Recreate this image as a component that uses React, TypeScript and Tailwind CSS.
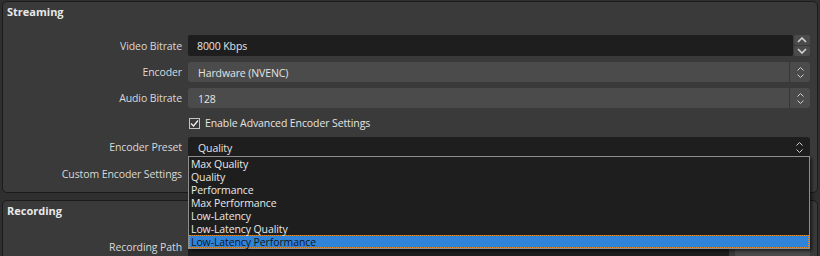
import React from "react";

const Up = ({ big }: { big?: boolean }) =>
  big ? (
    <svg width="10" height="6" viewBox="0 0 10 6"><path d="M1 5 L5 1 L9 5" fill="none" stroke="#d4d4d4" strokeWidth="1.6" /></svg>
  ) : (
    <svg width="7" height="4" viewBox="0 0 7 4"><path d="M0.5 3.5 L3.5 0.5 L6.5 3.5" fill="none" stroke="#cfcfcf" strokeWidth="1" /></svg>
  );
const Down = ({ big }: { big?: boolean }) =>
  big ? (
    <svg width="10" height="6" viewBox="0 0 10 6"><path d="M1 1 L5 5 L9 1" fill="none" stroke="#d4d4d4" strokeWidth="1.6" /></svg>
  ) : (
    <svg width="7" height="4" viewBox="0 0 7 4"><path d="M0.5 0.5 L3.5 3.5 L6.5 0.5" fill="none" stroke="#cfcfcf" strokeWidth="1" /></svg>
  );

const ComboArrows = ({ divider }: { divider?: boolean }) => (
  <div className={`w-[21px] h-full flex flex-col items-center justify-center gap-[3px] ${divider ? "border-l border-[#363636]" : ""}`}>
    <Up />
    <Down />
  </div>
);

const Label = ({ children }: { children: React.ReactNode }) => (
  <div className="w-[179px] h-full pt-[2px] text-right text-[#d9d9d9] flex items-center justify-end">{children}</div>
);

export default function App() {
  const items = [
    "Max Quality",
    "Quality",
    "Performance",
    "Max Performance",
    "Low-Latency",
    "Low-Latency Quality",
    "Low-Latency Performance",
  ];
  return (
    <div
      className="relative w-[820px] h-[256px] overflow-hidden bg-[#2f2f2f] pt-[1px] px-[2px] text-[10.5px] tracking-[-0.1px] text-[#e4e4e4]"
      style={{ fontFamily: '"Open Sans", "Noto Sans", sans-serif' }}
    >
      <section className="h-[192px] rounded-[5px] border border-[#1b1b1b] bg-[#3a3a3a]">
        <div className="h-[20px] leading-[20px] pl-[4px] text-[11px] tracking-normal font-bold text-[#e8e8e8]">Streaming</div>
        <div className="flex flex-col pr-[7px]">
          <div className="mt-[13px] h-[21px] flex gap-[6px]">
            <Label>Video Bitrate</Label>
            <div className="flex-1 flex">
              <div className="flex-1 rounded-[2px] bg-[#1e1e1e] pl-[9px] pt-[1px] leading-[21px]">8000 Kbps</div>
              <div className="w-[16px] ml-[1px] flex flex-col gap-[1px]">
                <div className="flex-1 rounded-[2px] bg-[#4b4b4b] flex items-center justify-center"><Up big /></div>
                <div className="flex-1 rounded-[2px] bg-[#4b4b4b] flex items-center justify-center"><Down big /></div>
              </div>
            </div>
          </div>
          <div className="mt-[6px] h-[20px] flex gap-[6px]">
            <Label>Encoder</Label>
            <div className="flex-1 flex rounded-[3px] bg-[#4b4b4b]">
              <div className="flex-1 pl-[10px] pt-[1px] leading-[20px]">Hardware (NVENC)</div>
              <ComboArrows divider />
            </div>
          </div>
          <div className="mt-[6px] h-[20px] flex gap-[6px]">
            <Label>Audio Bitrate</Label>
            <div className="flex-1 flex rounded-[3px] bg-[#4b4b4b]">
              <div className="flex-1 pl-[10px] pt-[1px] leading-[20px]">128</div>
              <ComboArrows divider />
            </div>
          </div>
          <div className="mt-[6px] h-[18px] flex gap-[6px]">
            <div className="w-[179px]" />
            <div className="flex-1 flex items-center pl-[1px] gap-[5px]">
              <div className="w-[11px] h-[11px] border border-[#c4c4c4] bg-[#3a3a3a] flex items-center justify-center">
                <svg width="9" height="9" viewBox="0 0 9 9"><path d="M1 4.5 L3.5 7 L8 1.5" fill="none" stroke="#f0f0f0" strokeWidth="1.3" /></svg>
              </div>
              <span className="pt-[2px] text-[#e4e4e4]">Enable Advanced Encoder Settings</span>
            </div>
          </div>
          <div className="mt-[5px] h-[20px] flex gap-[6px]">
            <Label>Encoder Preset</Label>
            <div className="flex-1 flex rounded-[3px] bg-[#1e1e1e]">
              <div className="flex-1 pl-[10px] pt-[1px] leading-[20px]">Quality</div>
              <ComboArrows />
            </div>
          </div>
          <div className="mt-[6px] h-[21px] flex gap-[6px]">
            <Label>Custom Encoder Settings</Label>
            <div className="flex-1 rounded-[2px] bg-[#1e1e1e]" />
          </div>
        </div>
      </section>
      <section className="mt-[7px] h-[80px] rounded-[5px] border border-[#1b1b1b] bg-[#3a3a3a]">
        <div className="h-[20px] leading-[20px] pl-[4px] text-[11px] tracking-normal font-bold text-[#e8e8e8]">Recording</div>
        <div className="mt-[15px] h-[21px] flex gap-[6px] pr-[7px]">
          <Label>Recording Path</Label>
          <div className="flex-1 flex gap-[6px]">
            <div className="flex-1 rounded-[2px] bg-[#1e1e1e]" />
            <div className="w-[75px] rounded-[3px] bg-[#4b4b4b]" />
          </div>
        </div>
      </section>

      <div className="absolute left-[188px] top-[156px] w-[622px] h-[93px] border border-[#8e8e8e] bg-[#1e1e1e] shadow-[2px_2px_3px_rgba(0,0,0,0.6)]">
        {items.map((it, i) =>
          i === items.length - 1 ? (
            <div key={it} className="h-[13px] pt-[1px] leading-[10px] pl-[1px] bg-[#2f84da] border border-dotted border-[#e08a2c] text-[#141414]">
              {it}
            </div>
          ) : (
            <div key={it} className="h-[13px] pt-[1px] leading-[12px] pl-[2px] text-[#e8e8e8]">
              {it}
            </div>
          )
        )}
      </div>
    </div>
  );
}
